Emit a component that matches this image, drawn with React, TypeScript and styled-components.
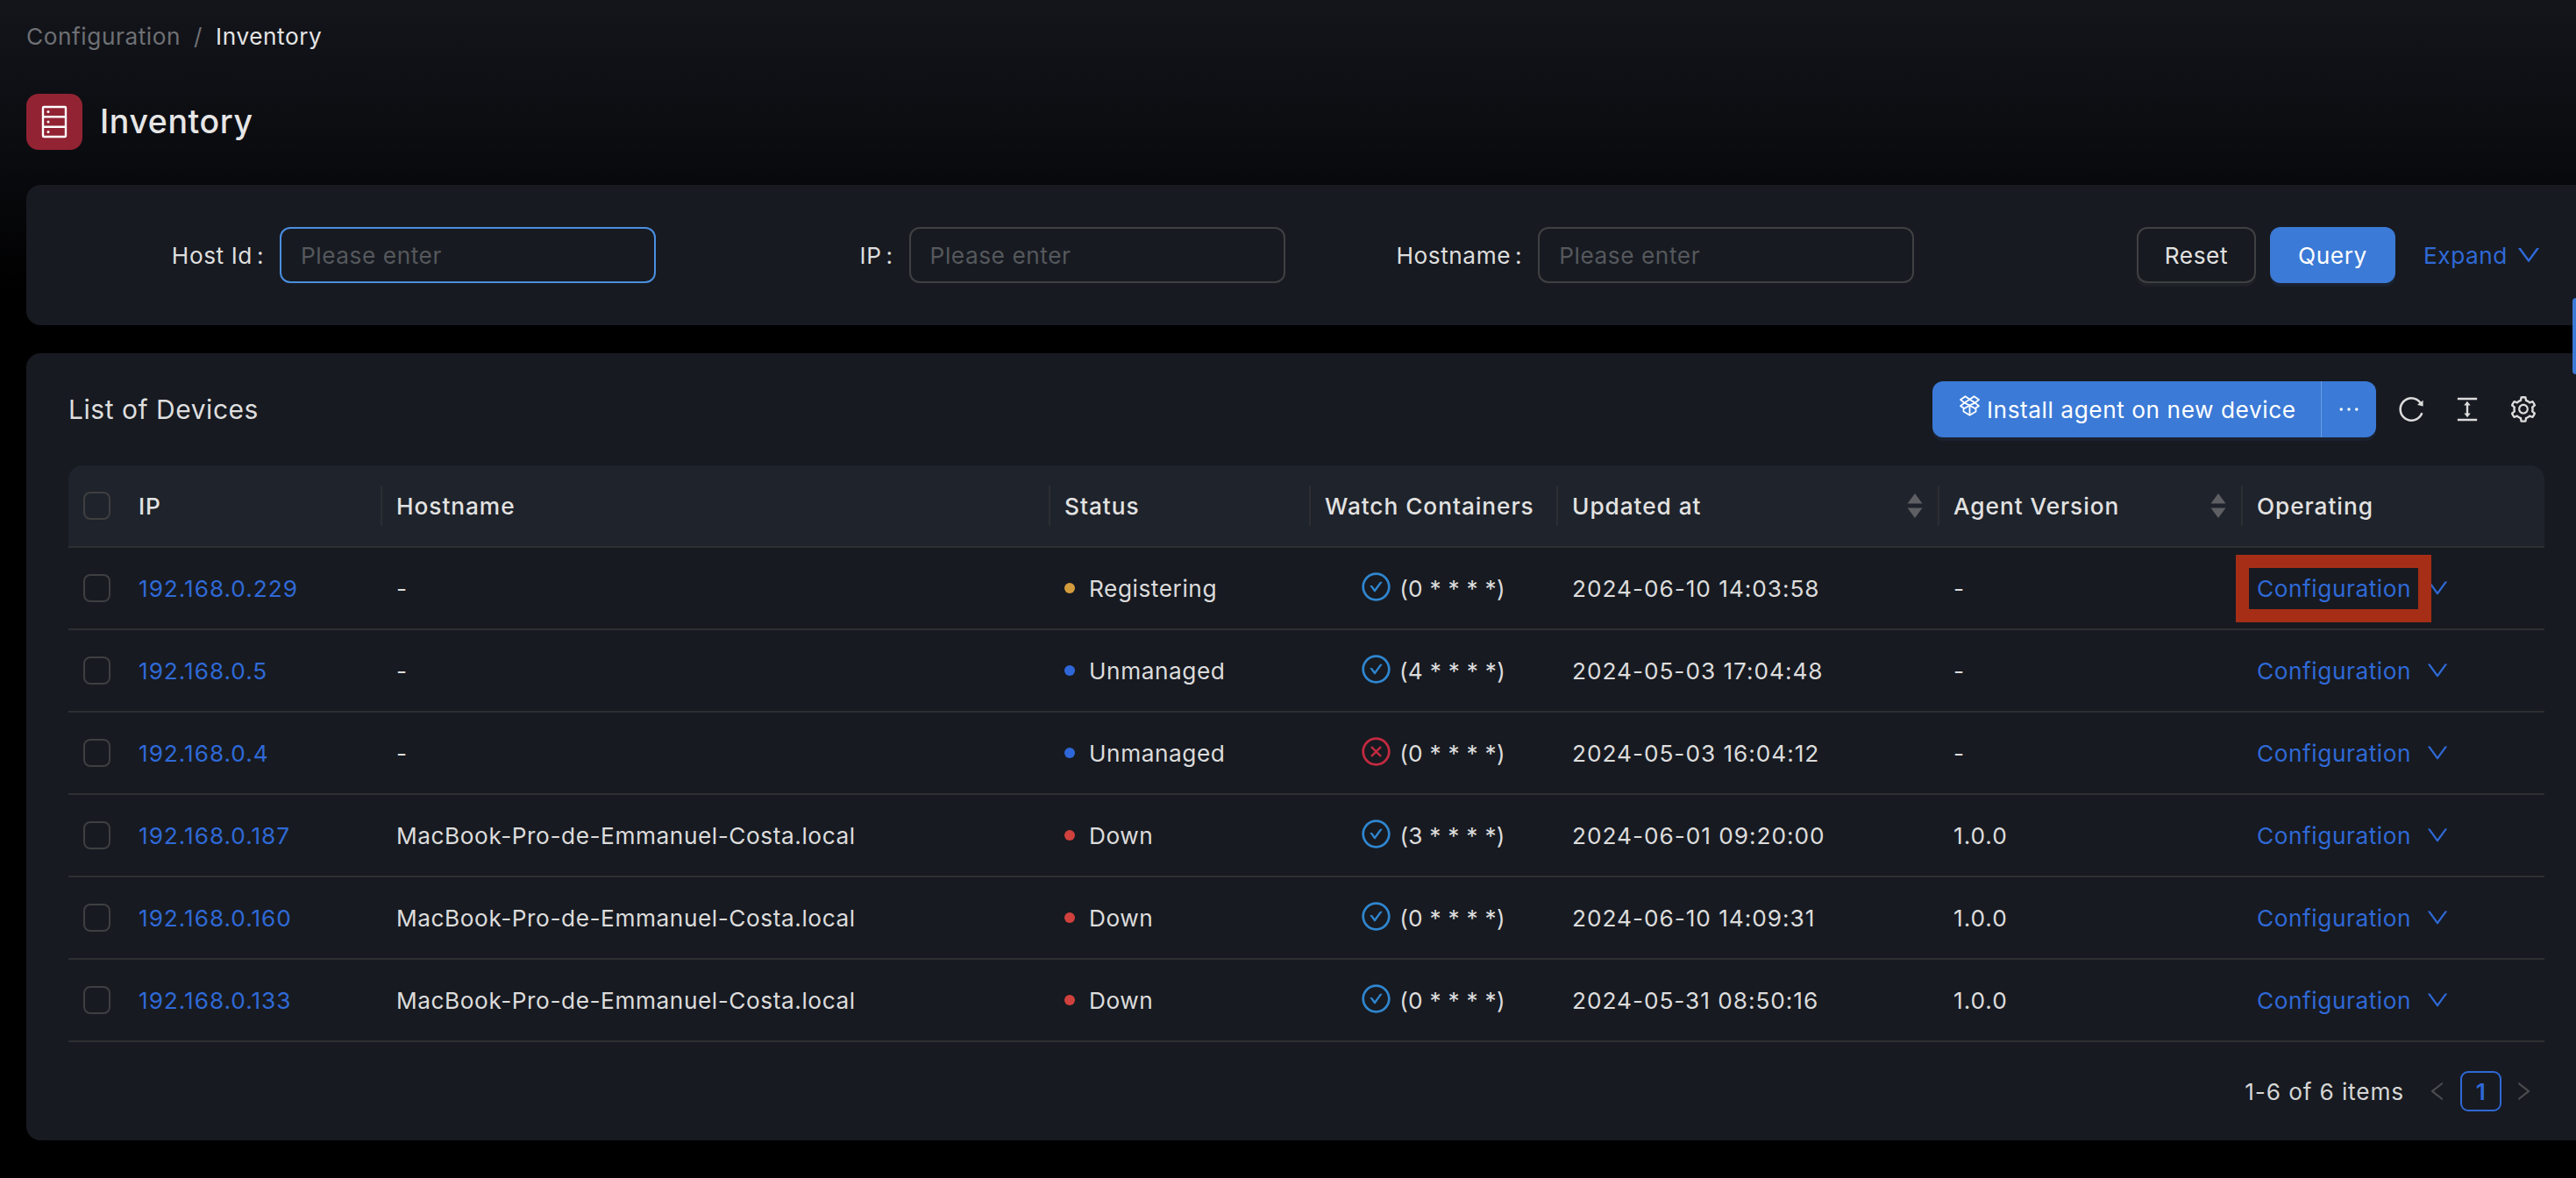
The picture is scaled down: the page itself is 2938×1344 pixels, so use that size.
import React from "react";
import styled, { createGlobalStyle } from "styled-components";
import {
  AiOutlineCheckCircle,
  AiOutlineCloseCircle,
  AiOutlineColumnHeight,
  AiOutlineDown,
  AiOutlineEllipsis,
  AiOutlineLeft,
  AiOutlineReload,
  AiOutlineRight,
  AiOutlineSetting,
} from "react-icons/ai";

const GlobalStyle = createGlobalStyle`
  html, body { margin: 0; padding: 0; background: #000; }
  body { font-family: Inter, "Liberation Sans", sans-serif; }
  * { box-sizing: border-box; }
`;

const COLUMNS = "62px 294px 762px 297px 282px 435px 346px 346px";
const BLUE = "#3b7ad6";
const LINK = "#2f69d6";
const TEXT = "#dcdcdc";

const Page = styled.div`
  position: relative;
  width: 2938px;
  height: 1344px;
  overflow: hidden;
  padding: 22px 0 0 30px;
  background: linear-gradient(180deg, #13151b 0, #0b0c10 170px, #000 330px);
  color: ${TEXT};
  font-size: 26.25px;
  letter-spacing: 0.55px;
`;

const Breadcrumb = styled.nav`
  display: flex;
  align-items: center;
  height: 40px;
  line-height: 40px;
  color: #6e7074;
`;

const Separator = styled.span`
  margin: 0 15px;
`;

const Current = styled.span`
  color: #e4e4e4;
`;

const TitleRow = styled.header`
  display: flex;
  align-items: center;
  gap: 20px;
  height: 64px;
  margin-top: 45px;
`;

const TitleBadge = styled.div`
  display: flex;
  align-items: center;
  justify-content: center;
  width: 64px;
  height: 64px;
  border-radius: 14px;
  background: #922333;
`;

const Title = styled.h1`
  margin: 0;
  color: #e6e6e6;
  font-size: 37.5px;
  font-weight: 500;
  line-height: 64px;
  letter-spacing: 0.6px;
`;

const FilterCard = styled.section`
  display: flex;
  align-items: center;
  height: 160px;
  margin-top: 40px;
  padding: 0 38px 0 40px;
  background: #171a21;
  border-radius: 16px 0 0 16px;
`;

const Field = styled.label`
  display: flex;
  align-items: center;
  width: 717.6px;
`;

const FieldLabel = styled.span`
  width: 231px;
  margin-right: 18px;
  text-align: right;
  color: #dedede;
  white-space: nowrap;
`;

const Colon = styled.span`
  margin-left: 5px;
`;

const Input = styled.input<{ $focused?: boolean }>`
  width: 429px;
  height: 64px;
  padding: 0 22px;
  background: transparent;
  border: 2px solid ${(p) => (p.$focused ? "#4a8fe0" : "#3f4042")};
  border-radius: 12px;
  color: ${TEXT};
  font: inherit;
  letter-spacing: inherit;
  outline: none;
  &::placeholder {
    color: #55585c;
    opacity: 1;
  }
`;

const Actions = styled.div`
  display: flex;
  align-items: center;
  margin-left: auto;
`;

const GhostButton = styled.button`
  width: 136px;
  height: 64px;
  background: transparent;
  border: 2px solid #3f4042;
  border-radius: 12px;
  box-shadow: 0 4px 0 rgba(255, 255, 255, 0.03);
  color: #e2e2e2;
  font: inherit;
  letter-spacing: inherit;
`;

const PrimaryButton = styled.button`
  width: 143px;
  height: 64px;
  margin-left: 16px;
  background: ${BLUE};
  border: 0;
  border-radius: 12px;
  box-shadow: 0 4px 0 rgba(59, 122, 214, 0.08);
  color: #fff;
  font: inherit;
  letter-spacing: inherit;
`;

const ExpandLink = styled.span`
  display: flex;
  align-items: center;
  gap: 8px;
  margin-left: 32px;
  color: ${LINK};
`;

const EdgeTab = styled.div`
  position: absolute;
  top: 340px;
  right: 0;
  width: 4px;
  height: 87px;
  background: ${BLUE};
  border-radius: 8px 0 0 8px;
`;

const TableCard = styled.section`
  height: 898px;
  margin-top: 32px;
  padding: 32px 36px 33px 48px;
  background: #171a21;
  border-radius: 16px 0 0 16px;
`;

const CardHeader = styled.div`
  display: flex;
  align-items: center;
  height: 64px;
`;

const CardTitle = styled.h2`
  margin: 0;
  color: #dedede;
  font-size: 30px;
  font-weight: 400;
  letter-spacing: 0.53px;
`;

const Toolbar = styled.div`
  display: flex;
  align-items: center;
  margin-left: auto;
`;

const SplitButton = styled.div`
  display: flex;
  height: 64px;
  border-radius: 12px;
  background: ${BLUE};
  box-shadow: 0 4px 0 rgba(59, 122, 214, 0.08);
  color: #fff;
`;

const SplitMain = styled.button`
  display: flex;
  align-items: center;
  gap: 8px;
  width: 443px;
  padding: 0 0 0 31px;
  background: none;
  border: 0;
  color: inherit;
  font: inherit;
  letter-spacing: inherit;
  white-space: nowrap;
`;

const BoxGlyph = styled.svg`
  width: 23px;
  height: 24px;
  margin-top: -9px;
  flex: none;
`;

const SplitMore = styled.button`
  display: flex;
  align-items: center;
  justify-content: center;
  width: 63px;
  background: none;
  border: 0;
  border-left: 1.5px solid #6a9ce2;
  color: inherit;
  font-size: 32px;
`;

const ToolIcons = styled.div`
  display: flex;
  align-items: center;
  gap: 30px;
  margin: 0 7px 0 23px;
  color: #dcdcdc;
  font-size: 34px;
  svg {
    display: block;
  }
`;

const Table = styled.div`
  margin-top: 32px;
`;

const HeaderRow = styled.div`
  display: grid;
  grid-template-columns: ${COLUMNS};
  height: 94px;
  background: #1f232b;
  border-bottom: 2px solid #2e2f31;
  border-radius: 16px 16px 0 0;
  color: #e2e2e2;
  font-weight: 500;
  letter-spacing: 0.95px;
`;

const BodyRow = styled.div`
  display: grid;
  grid-template-columns: ${COLUMNS};
  height: 94px;
  border-bottom: 2px solid #2e2f31;
`;

const HeaderCell = styled.div<{ $divider?: boolean }>`
  position: relative;
  display: flex;
  align-items: center;
  justify-content: space-between;
  padding: 0 18px 0 18px;
  white-space: nowrap;
  &::before {
    content: "";
    display: ${(p) => (p.$divider ? "block" : "none")};
    position: absolute;
    left: 0;
    top: 23px;
    bottom: 23px;
    width: 2px;
    background: #2c2e33;
  }
`;

const Cell = styled.div<{ $center?: boolean; $spacing?: string }>`
  display: flex;
  align-items: center;
  justify-content: ${(p) => (p.$center ? "center" : "flex-start")};
  padding: 0 18px;
  white-space: nowrap;
  letter-spacing: ${(p) => p.$spacing ?? "inherit"};
`;

const CheckCell = styled.div`
  display: flex;
  align-items: center;
  padding-left: 17px;
`;

const Checkbox = styled.span`
  display: block;
  width: 31px;
  height: 32px;
  border: 2px solid #3e3f41;
  border-radius: 8px;
`;

const IpLink = styled.a`
  color: ${LINK};
`;

const Dot = styled.span<{ $color: string }>`
  width: 12px;
  height: 12px;
  margin-right: 16px;
  border-radius: 50%;
  background: ${(p) => p.$color};
`;

const CronIcon = styled.span<{ $color: string }>`
  display: flex;
  margin: -4px 8px 0 0;
  color: ${(p) => p.$color};
  font-size: 37px;
`;

const SortIcon = styled.svg`
  width: 18px;
  height: 28px;
  margin-right: -1px;
`;

const OperationCell = styled(Cell)`
  position: relative;
`;

const ChevronLink = styled.span`
  display: flex;
  margin-left: 15px;
  color: ${LINK};
  font-size: 30px;
`;

const ConfigLink = styled.a`
  color: ${LINK};
`;

const Annotation = styled.div`
  position: absolute;
  left: -6px;
  top: 8px;
  width: 223px;
  height: 77px;
  border: 15px solid #a62e17;
  pointer-events: none;
`;

const Pagination = styled.div`
  display: flex;
  align-items: center;
  justify-content: flex-end;
  height: 46px;
  margin-top: 33px;
  padding-right: 10px;
`;

const PageSummary = styled.span`
  color: #d6d6d6;
  margin-right: 24px;
  letter-spacing: 0.85px;
`;

const PageArrow = styled.span`
  display: flex;
  color: #4a4b4e;
  font-size: 28px;
`;

const PageBox = styled.span`
  display: flex;
  align-items: center;
  justify-content: center;
  width: 47px;
  height: 46px;
  margin: 0 11px 0 12px;
  border: 2px solid ${LINK};
  border-radius: 9px;
  color: ${LINK};
  font-weight: 600;
`;

function ServerGlyph() {
  return (
    <svg width="30" height="38" viewBox="0 0 30 38" fill="none" stroke="#fff" strokeWidth="2.4">
      <rect x="2" y="2" width="26" height="34" rx="1" />
      <path d="M2 13.3H28M2 24.7H28" />
      <circle cx="8" cy="7.6" r="1.5" fill="#fff" stroke="none" />
      <circle cx="8" cy="19" r="1.5" fill="#fff" stroke="none" />
      <circle cx="8" cy="30.4" r="1.5" fill="#fff" stroke="none" />
    </svg>
  );
}

function SortGlyph() {
  return (
    <SortIcon viewBox="0 0 18 28" fill="#5d5f63">
      <path d="M9 0L17.5 11.5H0.5Z" />
      <path d="M9 28L17.5 16.5H0.5Z" />
    </SortIcon>
  );
}

function PackageGlyph() {
  return (
    <BoxGlyph viewBox="0 0 23 24" fill="none" stroke="#fff" strokeWidth="1.8" strokeLinejoin="round">
      <path d="M6.5 1.2L11.5 4.8L16.5 1.2L22 5L17.5 8.6L22 12.2L17.5 15L11.5 11.5L5.5 15L1 12.2L5.5 8.6L1 5Z" />
      <path d="M5.5 8.6L11.5 4.8L17.5 8.6L11.5 11.5Z" />
      <path d="M4.5 14.5V18.6L11.5 22.8L18.5 18.6V14.5M11.5 11.5V22.8" />
    </BoxGlyph>
  );
}

type Device = {
  ip: string;
  host: string;
  status: "Registering" | "Unmanaged" | "Down";
  ok: boolean;
  cron: string;
  updated: string;
  version: string;
};

const STATUS_COLORS: Record<Device["status"], string> = {
  Registering: "#d39b3c",
  Unmanaged: "#2f67d8",
  Down: "#d0413e",
};

const MAC = "MacBook-Pro-de-Emmanuel-Costa.local";

const DEVICES: Device[] = [
  { ip: "192.168.0.229", host: "-", status: "Registering", ok: true, cron: "(0 * * * *)", updated: "2024-06-10 14:03:58", version: "-" },
  { ip: "192.168.0.5", host: "-", status: "Unmanaged", ok: true, cron: "(4 * * * *)", updated: "2024-05-03 17:04:48", version: "-" },
  { ip: "192.168.0.4", host: "-", status: "Unmanaged", ok: false, cron: "(0 * * * *)", updated: "2024-05-03 16:04:12", version: "-" },
  { ip: "192.168.0.187", host: MAC, status: "Down", ok: true, cron: "(3 * * * *)", updated: "2024-06-01 09:20:00", version: "1.0.0" },
  { ip: "192.168.0.160", host: MAC, status: "Down", ok: true, cron: "(0 * * * *)", updated: "2024-06-10 14:09:31", version: "1.0.0" },
  { ip: "192.168.0.133", host: MAC, status: "Down", ok: true, cron: "(0 * * * *)", updated: "2024-05-31 08:50:16", version: "1.0.0" },
];

const DIGIT_SPACING = "0.95px";

export default function App() {
  return (
    <Page>
      <GlobalStyle />
      <Breadcrumb>
        <span>Configuration</span>
        <Separator>/</Separator>
        <Current>Inventory</Current>
      </Breadcrumb>
      <TitleRow>
        <TitleBadge>
          <ServerGlyph />
        </TitleBadge>
        <Title>Inventory</Title>
      </TitleRow>

      <FilterCard>
        <Field>
          <FieldLabel>
            Host Id<Colon>:</Colon>
          </FieldLabel>
          <Input $focused placeholder="Please enter" />
        </Field>
        <Field>
          <FieldLabel>
            IP<Colon>:</Colon>
          </FieldLabel>
          <Input placeholder="Please enter" />
        </Field>
        <Field>
          <FieldLabel>
            Hostname<Colon>:</Colon>
          </FieldLabel>
          <Input placeholder="Please enter" />
        </Field>
        <Actions>
          <GhostButton>Reset</GhostButton>
          <PrimaryButton>Query</PrimaryButton>
          <ExpandLink>
            Expand <AiOutlineDown size={32} />
          </ExpandLink>
        </Actions>
      </FilterCard>
      <EdgeTab />

      <TableCard>
        <CardHeader>
          <CardTitle>List of Devices</CardTitle>
          <Toolbar>
            <SplitButton>
              <SplitMain>
                <PackageGlyph />
                Install agent on new device
              </SplitMain>
              <SplitMore>
                <AiOutlineEllipsis />
              </SplitMore>
            </SplitButton>
            <ToolIcons>
              <AiOutlineReload />
              <AiOutlineColumnHeight />
              <AiOutlineSetting />
            </ToolIcons>
          </Toolbar>
        </CardHeader>

        <Table>
          <HeaderRow>
            <CheckCell>
              <Checkbox />
            </CheckCell>
            <HeaderCell>IP</HeaderCell>
            <HeaderCell $divider>Hostname</HeaderCell>
            <HeaderCell $divider>Status</HeaderCell>
            <HeaderCell $divider>Watch Containers</HeaderCell>
            <HeaderCell $divider>
              Updated at
              <SortGlyph />
            </HeaderCell>
            <HeaderCell $divider>
              Agent Version
              <SortGlyph />
            </HeaderCell>
            <HeaderCell $divider>Operating</HeaderCell>
          </HeaderRow>
          {DEVICES.map((d, i) => (
            <BodyRow key={d.ip}>
              <CheckCell>
                <Checkbox />
              </CheckCell>
              <Cell $spacing={DIGIT_SPACING}>
                <IpLink>{d.ip}</IpLink>
              </Cell>
              <Cell>{d.host}</Cell>
              <Cell>
                <Dot $color={STATUS_COLORS[d.status]} />
                {d.status}
              </Cell>
              <Cell $center $spacing="0.25px">
                <CronIcon $color={d.ok ? "#2f86cf" : "#c42a40"}>
                  {d.ok ? <AiOutlineCheckCircle /> : <AiOutlineCloseCircle />}
                </CronIcon>
                {d.cron}
              </Cell>
              <Cell $spacing={DIGIT_SPACING}>{d.updated}</Cell>
              <Cell $spacing={DIGIT_SPACING}>{d.version}</Cell>
              <OperationCell>
                <ConfigLink>Configuration</ConfigLink>
                <ChevronLink>
                  <AiOutlineDown />
                </ChevronLink>
                {i === 0 && <Annotation />}
              </OperationCell>
            </BodyRow>
          ))}
        </Table>

        <Pagination>
          <PageSummary>1-6 of 6 items</PageSummary>
          <PageArrow>
            <AiOutlineLeft />
          </PageArrow>
          <PageBox>1</PageBox>
          <PageArrow>
            <AiOutlineRight />
          </PageArrow>
        </Pagination>
      </TableCard>
    </Page>
  );
}
